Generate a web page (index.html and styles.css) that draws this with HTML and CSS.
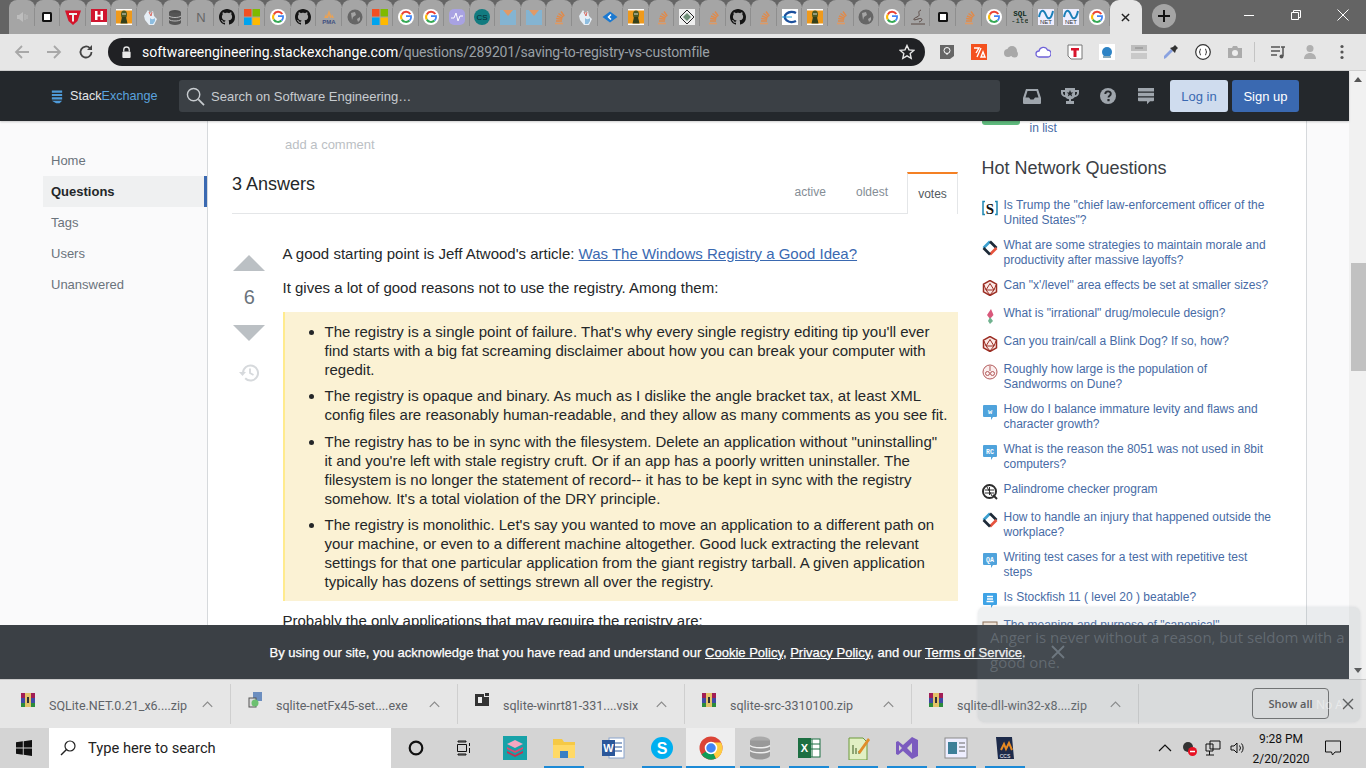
FILE: index.html
```html
<!DOCTYPE html>
<html lang="en">
<head>
<meta charset="utf-8">
<title>Saving to registry vs custom file - Software Engineering Stack Exchange</title>
<link rel="stylesheet" href="styles.css">
</head>
<body>
<svg class="defs" aria-hidden="true">
  <symbol id="spk" viewBox="0 0 16 16"><path d="M3 6h2l4-3v10l-4-3H3z" fill="#bdbdbd"/><path d="M11 5v6M13 6v4" stroke="#bdbdbd"/></symbol>
  <symbol id="box" viewBox="0 0 16 16"><rect x="3" y="3" width="10" height="10" rx="1.500" fill="#111"/><rect x="5" y="5" width="6" height="6" fill="#fff"/></symbol>
  <symbol id="tee" viewBox="0 0 16 16"><path d="M0 1.500h16L12.500 12 8 16 3.500 12z" fill="#d5132a"/><path d="M4 4h8v2H9v6.500H7V6H4z" fill="#eee"/></symbol>
  <symbol id="hh" viewBox="0 0 16 16"><rect width="16" height="16" fill="#fff"/><rect y="0" width="16" height="13" fill="#d0152f"/><path d="M4 2h2.500v3.800h3V2H12v9H9.500V7.500h-3V11H4z" fill="#fff"/></symbol>
  <symbol id="fig" viewBox="0 0 16 16"><rect width="16" height="16" fill="#fff"/><rect y="1.500" width="16" height="13" fill="#ef9a1c"/><ellipse cx="8" cy="5.500" rx="3" ry="4" fill="#4c5a23"/><path d="M6 8h4l1.500 6.500h-7z" fill="#33401b"/><circle cx="7" cy="5" r=".8" fill="#eee"/><circle cx="9" cy="5" r=".8" fill="#eee"/></symbol>
  <symbol id="hand" viewBox="0 0 16 16"><path d="M2 7l4-6 2 3 3-2 1 5 3 3-3 6H7L3 11z" fill="#e6eef6"/><path d="M8 9c2 2 4 1 5 0v3l-2 3H8z" fill="#8dbde0"/><path d="M7 3l2 4M10 3L9 7" stroke="#d8685f"/></symbol>
  <symbol id="db" viewBox="0 0 16 16"><ellipse cx="8" cy="3.500" rx="6" ry="2.500" fill="#4d4d4d"/><rect x="2" y="3.500" width="12" height="10" fill="#555"/><ellipse cx="8" cy="13.500" rx="6" ry="2.500" fill="#555"/><path d="M2 7c2 2 10 2 12 0M2 10.500c2 2 10 2 12 0" stroke="#bbb" fill="none"/></symbol>
  <symbol id="enn" viewBox="0 0 16 16"><text x="8" y="13" text-anchor="middle" font-family="Liberation Sans" font-size="13" fill="#666">N</text></symbol>
  <symbol id="gh" viewBox="0 0 16 16"><path fill="#141414" d="M8 0C3.580 0 0 3.580 0 8c0 3.540 2.290 6.530 5.470 7.590.4.070.55-.17.55-.38 0-.19-.01-.82-.01-1.490-2.010.37-2.530-.49-2.690-.94-.09-.23-.48-.94-.82-1.130-.28-.15-.68-.52-.01-.53.63-.01 1.080.58 1.230.82.720 1.210 1.870.87 2.330.66.070-.52.280-.87.510-1.070-1.780-.2-3.640-.89-3.640-3.950 0-.87.310-1.590.820-2.150-.08-.2-.36-1.020.08-2.120 0 0 .67-.21 2.200.82.640-.18 1.320-.27 2-.27s1.360.09 2 .27c1.530-1.040 2.200-.82 2.200-.82.440 1.100.160 1.920.080 2.120.510.560.820 1.270.820 2.150 0 3.070-1.870 3.750-3.650 3.950.290.250.540.730.540 1.480 0 1.070-.01 1.930-.01 2.200 0 .21.150.460.550.380A8.010 8.010 0 0 0 16 8c0-4.420-3.580-8-8-8z"/></symbol>
  <symbol id="ms" viewBox="0 0 16 16"><rect width="7.500" height="7.500" fill="#f25022"/><rect x="8.500" width="7.500" height="7.500" fill="#7fba00"/><rect y="8.500" width="7.500" height="7.500" fill="#00a4ef"/><rect x="8.500" y="8.500" width="7.500" height="7.500" fill="#ffb900"/></symbol>
  <symbol id="goo" viewBox="0 0 16 16"><circle cx="8" cy="8" r="8" fill="#fff"/><path d="M12.300 5A5 5 0 0 0 3.800 5.400" stroke="#ea4335" stroke-width="2" fill="none"/><path d="M3.800 5.400a5 5 0 0 0 0 5.200" stroke="#fbbc05" stroke-width="2" fill="none"/><path d="M3.800 10.600A5 5 0 0 0 11.500 11.500" stroke="#34a853" stroke-width="2" fill="none"/><path d="M8 7.200h5v1.600a5 5 0 0 1-1.500 2.700" stroke="#4285f4" stroke-width="1.800" fill="none"/></symbol>
  <symbol id="pma" viewBox="0 0 16 16"><path d="M8 1l3 8H9L8 6 7 9H5zM3 9l2-4 1 4zM13 9l-2-4-1 4z" fill="#e8a358"/><text x="8" y="14.500" text-anchor="middle" font-family="Liberation Sans" font-size="6" font-weight="700" fill="#3f4f80">PMA</text></symbol>
  <symbol id="globe" viewBox="0 0 16 16"><circle cx="8" cy="8" r="7.500" fill="#666"/><path d="M4 4l4-1 1 3-3 2-1 3zM10 10l3-2 0 3-2 2z" fill="#a5a5a5"/></symbol>
  <symbol id="wave" viewBox="0 0 16 16"><rect width="16" height="16" rx="5" fill="#a8a2e2"/><path d="M2 9h3l2-5 2 8 2-5h3" stroke="#fff" fill="none"/></symbol>
  <symbol id="teal" viewBox="0 0 16 16"><circle cx="8" cy="8" r="8" fill="#127b80"/><text x="8" y="11" text-anchor="middle" font-family="Liberation Sans" font-size="8" fill="#0a2a30">CS</text></symbol>
  <symbol id="em" viewBox="0 0 16 16"><rect y="1" width="16" height="15" fill="#84b4d2"/><path d="M3 1l5 6 5-6z" fill="#e09a68"/></symbol>
  <symbol id="so" viewBox="0 0 16 16"><path d="M4 14.500h8" stroke="#dd9a66" stroke-width="1.600"/><path d="M5 12h6M5.200 9.500l6 .8M6 7l5.500 2.200M7.500 4.500l4.800 3.500M10 2.500l3.300 4.500" stroke="#e08a4a" stroke-width="1.400"/></symbol>
  <symbol id="blu" viewBox="0 0 16 16"><path d="M8 2.500L15.500 8 8 13.500.5 8z" fill="#1b79d1"/><path d="M9 5.500L6.500 8 9 10.500" stroke="#fff" stroke-width="1.500" fill="none"/></symbol>
  <symbol id="dia" viewBox="0 0 16 16"><rect width="16" height="16" fill="#eee"/><path d="M8 1l7 7-7 7-7-7z" fill="none" stroke="#222"/><path d="M8 4l4 4-4 4-4-4z" fill="#6f8f78"/></symbol>
  <symbol id="cee" viewBox="0 0 16 16"><rect width="16" height="16" fill="#fff"/><path d="M14 4a7 5 0 1 0 0 8" stroke="#1b4f9c" stroke-width="2.500" fill="none"/><path d="M0 8h10" stroke="#1fa0d8"/></symbol>
  <symbol id="scr" viewBox="0 0 16 16"><path d="M11 1C6 3 12 6 7 8s-4 4 1 2 5 2 1 3M1 15h14" stroke="#5a4a45" fill="none"/></symbol>
  <symbol id="sql" viewBox="0 0 16 16"><text x="8" y="7" text-anchor="middle" font-family="Liberation Mono" font-size="7.500" font-weight="700" fill="#0c2a20">SQL</text><text x="8" y="14" text-anchor="middle" font-family="Liberation Mono" font-size="7.500" fill="#0c2a20">-ite</text></symbol>
  <symbol id="net" viewBox="0 0 16 16"><rect width="16" height="16" fill="#eef"/><path d="M1 8c2-9 5-7 7-2s5 5 7-4" stroke="#1a7fb8" stroke-width="2" fill="none"/><text x="8" y="15" text-anchor="middle" font-family="Liberation Sans" font-size="6" fill="#333">NET</text></symbol>
  <symbol id="rar" viewBox="0 0 16 16"><rect x="1" y="1" width="14" height="5" fill="#a21e55"/><rect x="1" y="6" width="14" height="5" fill="#3f4aa5"/><rect x="1" y="11" width="14" height="4" fill="#2c8c3c"/><rect x="5" y="1" width="6" height="14" fill="#e4c36a"/><rect x="7" y="5" width="2" height="6" fill="#333"/></symbol>
  <symbol id="sx" viewBox="0 0 16 16"><path d="M3 1.500H1v13h2" stroke="#1d87b2" stroke-width="1.500" fill="none"/><path d="M13 1.500h2v13h-2" stroke="#1d87b2" stroke-width="1.500" fill="none"/><text x="8" y="13.500" text-anchor="middle" font-family="Liberation Serif" font-weight="700" font-size="15" fill="#111">S</text></symbol>
  <symbol id="wp" viewBox="0 0 16 16"><path d="M1.500 8L8 1.500" stroke="#3ca0d0" stroke-width="2.600"/><path d="M8 1.500L14.500 8" stroke="#1d2a38" stroke-width="2.600"/><path d="M14.500 8L8 14.500" stroke="#e7543e" stroke-width="2.600"/><path d="M8 14.500L1.500 8" stroke="#1d2a38" stroke-width="2.600"/></symbol>
  <symbol id="rpg" viewBox="0 0 16 16"><path d="M8 .5l6.500 3.700v7.600L8 15.500 1.500 11.800V4.200z" fill="#fbe9e6" stroke="#9b2d23" stroke-width="1.500"/><path d="M8 3.500l4 6.500H4zM2 5l2 5 4 5 4-5 2-5" fill="none" stroke="#9b2d23"/></symbol>
  <symbol id="chm" viewBox="0 0 16 16"><path d="M9 1l2.500 6L8 11 5 7z" fill="#d9587b"/><path d="M8 9l3 4-3 3-2-3z" fill="#70b28f"/></symbol>
  <symbol id="wrm" viewBox="0 0 16 16"><circle cx="8" cy="8" r="7" fill="#fbeeee" stroke="#b25a5a"/><circle cx="5.500" cy="9.500" r="2" fill="none" stroke="#b25a5a"/><circle cx="10.500" cy="9.500" r="2" fill="none" stroke="#b25a5a"/><path d="M8 2v5" stroke="#b25a5a"/></symbol>
  <symbol id="bubw" viewBox="0 0 16 16"><path d="M2 1h12a1 1 0 0 1 1 1v10a1 1 0 0 1-1 1h-3l-2 3v-3H2a1 1 0 0 1-1-1V2a1 1 0 0 1 1-1z" fill="#4fa3dc"/><text x="8" y="10" text-anchor="middle" font-family="Liberation Mono" font-size="7" font-weight="700" fill="#fff">w</text></symbol>
  <symbol id="bubr" viewBox="0 0 16 16"><path d="M2 1h12a1 1 0 0 1 1 1v10a1 1 0 0 1-1 1h-3l-2 3v-3H2a1 1 0 0 1-1-1V2a1 1 0 0 1 1-1z" fill="#4fa3dc"/><text x="8" y="10" text-anchor="middle" font-family="Liberation Mono" font-size="6.500" font-weight="700" fill="#fff">RC</text></symbol>
  <symbol id="bubq" viewBox="0 0 16 16"><path d="M2 1h12a1 1 0 0 1 1 1v10a1 1 0 0 1-1 1h-3l-2 3v-3H2a1 1 0 0 1-1-1V2a1 1 0 0 1 1-1z" fill="#4fa3dc"/><text x="8" y="10" text-anchor="middle" font-family="Liberation Mono" font-size="6.500" font-weight="700" fill="#fff">QA</text></symbol>
  <symbol id="bubc" viewBox="0 0 16 16"><path d="M2 1h12a1 1 0 0 1 1 1v10a1 1 0 0 1-1 1h-3l-2 3v-3H2a1 1 0 0 1-1-1V2a1 1 0 0 1 1-1z" fill="#3ea3e6"/><path d="M5 4.500h6M5 7h6M4.500 9.500h7" stroke="#fff" stroke-width="1.300"/></symbol>
  <symbol id="cr" viewBox="0 0 16 16"><circle cx="7.500" cy="7.500" r="6.500" fill="#fff" stroke="#2d2d2d" stroke-width="2"/><path d="M3 6h9M3 9h9M7.500 3v8M5 3l5 9" stroke="#2d2d2d"/><path d="M11 11l4 4" stroke="#2d2d2d" stroke-width="2"/></symbol>
  <symbol id="can" viewBox="0 0 16 16"><rect x="1" y="2" width="14" height="12" fill="#fdeee0" stroke="#8c6a4e"/><path d="M4 5l2 2 2-2M9 9h4" stroke="#b44" fill="none"/></symbol>
  <symbol id="chev" viewBox="0 0 14 8"><path d="M1 7l6-6 6 6" fill="none" stroke="#8a8a8a" stroke-width="1.500"/></symbol>
</svg>

<div class="tabstrip">
  <div class="tabs">
    <div class="tab"><svg class="fav"><use href="#spk"/></svg></div>
    <div class="tab"><svg class="fav"><use href="#box"/></svg></div>
    <div class="tab"><svg class="fav"><use href="#tee"/></svg></div>
    <div class="tab"><svg class="fav"><use href="#hh"/></svg></div>
    <div class="tab"><svg class="fav"><use href="#fig"/></svg></div>
    <div class="tab"><svg class="fav"><use href="#hand"/></svg></div>
    <div class="tab"><svg class="fav"><use href="#db"/></svg></div>
    <div class="tab"><svg class="fav"><use href="#enn"/></svg></div>
    <div class="tab"><svg class="fav"><use href="#gh"/></svg></div>
    <div class="tab"><svg class="fav"><use href="#ms"/></svg></div>
    <div class="tab"><svg class="fav"><use href="#goo"/></svg></div>
    <div class="tab"><svg class="fav"><use href="#gh"/></svg></div>
    <div class="tab"><svg class="fav"><use href="#pma"/></svg></div>
    <div class="tab"><svg class="fav"><use href="#globe"/></svg></div>
    <div class="tab"><svg class="fav"><use href="#ms"/></svg></div>
    <div class="tab"><svg class="fav"><use href="#goo"/></svg></div>
    <div class="tab"><svg class="fav"><use href="#goo"/></svg></div>
    <div class="tab"><svg class="fav"><use href="#wave"/></svg></div>
    <div class="tab"><svg class="fav"><use href="#teal"/></svg></div>
    <div class="tab"><svg class="fav"><use href="#em"/></svg></div>
    <div class="tab"><svg class="fav"><use href="#em"/></svg></div>
    <div class="tab"><svg class="fav"><use href="#so"/></svg></div>
    <div class="tab"><svg class="fav"><use href="#hand"/></svg></div>
    <div class="tab"><svg class="fav"><use href="#blu"/></svg></div>
    <div class="tab"><svg class="fav"><use href="#fig"/></svg></div>
    <div class="tab"><svg class="fav"><use href="#so"/></svg></div>
    <div class="tab"><svg class="fav"><use href="#dia"/></svg></div>
    <div class="tab"><svg class="fav"><use href="#so"/></svg></div>
    <div class="tab"><svg class="fav"><use href="#gh"/></svg></div>
    <div class="tab"><svg class="fav"><use href="#so"/></svg></div>
    <div class="tab"><svg class="fav"><use href="#cee"/></svg></div>
    <div class="tab"><svg class="fav"><use href="#fig"/></svg></div>
    <div class="tab"><svg class="fav"><use href="#so"/></svg></div>
    <div class="tab"><svg class="fav"><use href="#globe"/></svg></div>
    <div class="tab"><svg class="fav"><use href="#goo"/></svg></div>
    <div class="tab"><svg class="fav"><use href="#scr"/></svg></div>
    <div class="tab"><svg class="fav"><use href="#box"/></svg></div>
    <div class="tab"><svg class="fav"><use href="#so"/></svg></div>
    <div class="tab"><svg class="fav"><use href="#goo"/></svg></div>
    <div class="tab"><svg class="fav"><use href="#sql"/></svg></div>
    <div class="tab"><svg class="fav"><use href="#net"/></svg></div>
    <div class="tab"><svg class="fav"><use href="#net"/></svg></div>
    <div class="tab"><svg class="fav"><use href="#goo"/></svg></div>
    <div class="tab-active"><svg class="glyph10" viewBox="0 0 10 10"><path d="M1 1l8 8M9 1l-8 8" stroke="#222" stroke-width="1.600"/></svg></div>
  </div>
  <div class="newtab"><svg class="glyph12" viewBox="0 0 12 12"><path d="M6 0v12M0 6h12" stroke="#111" stroke-width="2"/></svg></div>
  <div class="winctl">
    <svg class="winbtn" viewBox="0 0 12 12"><path d="M1 6.500h10" stroke="#fff"/></svg>
    <svg class="winbtn" viewBox="0 0 12 12"><path d="M1.500 3.500h7v7h-7zM3.500 3.500v-2h7v7h-2" stroke="#fff" fill="none"/></svg>
    <svg class="winbtn" viewBox="0 0 12 12"><path d="M.5.500l11 11M11.500.500l-11 11" stroke="#fff"/></svg>
  </div>
</div>

<div class="toolbar">
  <div class="navs">
    <svg class="nav" viewBox="0 0 16 16"><path d="M15 8H2M8 2L2 8l6 6" fill="none" stroke="#a8a8a8" stroke-width="1.800"/></svg>
    <svg class="nav" viewBox="0 0 16 16"><path d="M1 8h13M8 2l6 6-6 6" fill="none" stroke="#a8a8a8" stroke-width="1.800"/></svg>
    <svg class="nav" viewBox="0 0 16 16"><path d="M13.500 8a5.500 5.500 0 1 1-1.600-3.900" fill="none" stroke="#444" stroke-width="1.800"/><path d="M14 1v5H9z" fill="#444"/></svg>
  </div>
  <div class="omni">
    <svg class="lock" viewBox="0 0 12 14"><path d="M3 6V4a3 3 0 0 1 6 0v2" fill="none" stroke="#e8e8e8" stroke-width="1.400"/><rect x="1.500" y="6" width="9" height="7" rx="1" fill="#e8e8e8"/></svg>
    <span class="url"><span class="url-host">softwareengineering.stackexchange.com</span>/questions/289201/saving-to-registry-vs-customfile</span>
    <svg class="star" viewBox="0 0 16 16"><path d="M8 1.500l2 4.400 4.800.5-3.600 3.200 1 4.700L8 11.900l-4.200 2.400 1-4.700L1.200 6.400 6 5.900z" fill="none" stroke="#e8e8e8" stroke-width="1.400"/></svg>
  </div>
  <div class="exts">
    <svg class="ext" viewBox="0 0 16 16"><path d="M1 1h14v11l-4 3H1z" fill="#666"/><circle cx="8" cy="6.500" r="3" fill="none" stroke="#fff"/><path d="M7 10h2" stroke="#fff"/></svg>
    <svg class="ext" viewBox="0 0 16 16"><rect width="16" height="16" fill="#f4511e"/><path d="M3 4h5L5 9M10 4l-4 9M10 13l2-5 2 5z" stroke="#fff" fill="none" stroke-width="1.400"/></svg>
    <svg class="ext" viewBox="0 0 16 16"><circle cx="5" cy="9" r="4" fill="#a8a8a8"/><circle cx="9" cy="7" r="5" fill="#a8a8a8"/><circle cx="11.500" cy="10" r="3.500" fill="#a8a8a8"/></svg>
    <svg class="ext" viewBox="0 0 16 16"><path d="M4 13a3 3 0 0 1 0-6 4.500 4.500 0 0 1 8.500-1A3.500 3.500 0 0 1 12.500 13z" fill="#fff" stroke="#6f62d8" stroke-width="1.300"/></svg>
    <svg class="ext" viewBox="0 0 16 16"><path d="M1 1h14v14H4l-3-3z" fill="#fff" stroke="#777"/><path d="M4 4h8v2.500H9.500V13h-3V6.500H4z" fill="#d8142c"/></svg>
    <svg class="ext" viewBox="0 0 16 16"><rect width="16" height="16" fill="#fff"/><circle cx="8" cy="8" r="5" fill="#2d83c5"/><rect x="4" y="12" width="8" height="2" fill="#8ab"/></svg>
    <svg class="ext" viewBox="0 0 16 16"><rect x="0" y="1" width="16" height="6" fill="#bdbdbd"/><rect x="0" y="9" width="16" height="6" fill="#c9c9c9"/><path d="M4 4h8" stroke="#888"/></svg>
    <svg class="ext" viewBox="0 0 16 16"><path d="M1 15l2-1 7-7-2-2-7 7z" fill="#8aa2e0"/><path d="M7 4l5 5 1-3 2-2-3-3-2 2z" fill="#333"/></svg>
    <svg class="ext" viewBox="0 0 16 16"><circle cx="8" cy="8" r="7.300" fill="#fff" stroke="#333" stroke-width="1.200"/><path d="M6 5c-2 0 0 3-2 3 2 0 0 3 2 3M10 5c2 0 0 3 2 3-2 0 0 3-2 3" stroke="#333" fill="none"/></svg>
    <svg class="ext" viewBox="0 0 16 16"><path d="M1 4h4l1-2h4l1 2h4v10H1z" fill="#ababab"/><circle cx="8" cy="9" r="3" fill="#eee"/></svg>
    <div class="ext-sep"></div>
    <svg class="ext" viewBox="0 0 16 16"><path d="M1 3h9M1 7h9M1 11h6M11 3h4M13 3v9" stroke="#555" stroke-width="1.500" fill="none"/><circle cx="11.500" cy="12.500" r="2" fill="#555"/></svg>
    <svg class="ext" viewBox="0 0 16 16"><circle cx="8" cy="4.500" r="3.500" fill="#b0b0b0"/><path d="M2 15c0-8 12-8 12 0z" fill="#b0b0b0"/></svg>
    <svg class="ext" viewBox="0 0 16 16"><circle cx="8" cy="2.500" r="1.600" fill="#555"/><circle cx="8" cy="8" r="1.600" fill="#555"/><circle cx="8" cy="13.500" r="1.600" fill="#555"/></svg>
  </div>
</div>

<div class="browser">
  <div class="viewport">
    <header class="topbar">
      <div class="logo">
        <svg class="logo-ico" viewBox="0 0 14 16"><path d="M1 1h12v2.500H1zM1 5h12v2.500H1zM1 9h12v2.500H1zM1 13h12l-3 3H6z" fill="#4f9bd9"/></svg>
        <span class="logo-a">Stack</span><span class="logo-b">Exchange</span>
      </div>
      <div class="search">
        <svg class="mag" viewBox="0 0 20 20"><circle cx="8" cy="8" r="6.500" fill="none" stroke="#c8ccd0" stroke-width="1.500"/><path d="M13 13l6 6" stroke="#c8ccd0" stroke-width="1.800"/></svg>
        <span>Search on Software Engineering…</span>
      </div>
      <div class="topicons">
        <svg class="ti" viewBox="0 0 18 18"><path d="M3 2h12l3 9v5a1 1 0 0 1-1 1H1a1 1 0 0 1-1-1v-5z" fill="#9fa6ad"/><path d="M2.500 10.500L4.500 4h9l2 6.500H12l-1.500 2h-3L6 10.500z" fill="#24282c"/></svg>
        <svg class="ti" viewBox="0 0 18 18"><path d="M4 1h10v2h4v3c0 2-2 4-4.500 4.200C12.800 11.500 11 12 10 12.300V14h3v3H5v-3h3v-1.700c-1-.3-2.800-.8-3.500-2.100C2 10 0 8 0 6V3h4zM2 5v1c0 1 1 2 2 2.300V5zM14 5v3.300c1-.3 2-1.300 2-2.300V5z" fill="#9fa6ad"/><path d="M9 3l1 2.500h2.300L10.500 7l.7 2.500L9 8 6.800 9.500 7.500 7 5.700 5.500H8z" fill="#24282c"/></svg>
        <svg class="ti" viewBox="0 0 18 18"><circle cx="9" cy="9" r="8" fill="#9fa6ad"/><path d="M6.300 7c0-3.500 5.500-3.500 5.500-.3 0 2-2.300 2-2.300 3.800" fill="none" stroke="#24282c" stroke-width="1.900"/><rect x="8.400" y="12" width="2.200" height="2.200" fill="#24282c"/></svg>
        <svg class="ti" viewBox="0 0 18 18"><path d="M1 1h16v3.500H1zM1 5.800h16v3.500H1zM1 10.600h16v2.600a1 1 0 0 1-1 1h-3l-3 3v-3H2a1 1 0 0 1-1-1z" fill="#9fa6ad"/></svg>
      </div>
      <a class="btn btn-login">Log in</a>
      <a class="btn btn-signup">Sign up</a>
    </header>
    <div class="content">
      <nav class="leftnav">
        <a class="nav-item">Home</a>
        <a class="nav-item nav-active">Questions</a>
        <a class="nav-item">Tags</a>
        <a class="nav-item">Users</a>
        <a class="nav-item">Unanswered</a>
      </nav>
      <div class="center">
        <main class="main">
          <div class="add-comment">add a comment</div>
          <div class="ans-head">
            <h2>3 Answers</h2>
            <div class="sort">
              <a class="sort-tab">active</a>
              <a class="sort-tab">oldest</a>
              <a class="sort-tab sort-active">votes</a>
            </div>
          </div>
          <div class="answer">
            <div class="votes">
              <div class="arrow-up"></div>
              <div class="count">6</div>
              <div class="arrow-down"></div>
              <svg class="hist" viewBox="0 0 20 20"><path d="M4 10a7.500 7.500 0 1 1 2.200 5.300" fill="none" stroke="#d6d9dc" stroke-width="2"/><path d="M0 9h7l-3.500 4z" fill="#d6d9dc"/><path d="M11 5.500V10l3.500 2" fill="none" stroke="#d6d9dc" stroke-width="1.800"/></svg>
            </div>
            <div class="post">
              <p>A good starting point is Jeff Atwood's article: <a class="link">Was The Windows Registry a Good Idea?</a></p>
              <p>It gives a lot of good reasons not to use the registry. Among them:</p>
              <blockquote>
                <ul>
                  <li>The registry is a single point of failure. That's why every single registry editing tip you'll ever find starts with a big fat screaming disclaimer about how you can break your computer with regedit.</li>
                  <li>The registry is opaque and binary. As much as I dislike the angle bracket tax, at least XML config files are reasonably human-readable, and they allow as many comments as you see fit.</li>
                  <li>The registry has to be in sync with the filesystem. Delete an application without "uninstalling" it and you're left with stale registry cruft. Or if an app has a poorly written uninstaller. The filesystem is no longer the statement of record-- it has to be kept in sync with the registry somehow. It's a total violation of the DRY principle.</li>
                  <li>The registry is monolithic. Let's say you wanted to move an application to a different path on your machine, or even to a different machine altogether. Good luck extracting the relevant settings for that one particular application from the giant registry tarball. A given application typically has dozens of settings strewn all over the registry.</li>
                </ul>
              </blockquote>
              <p>Probably the only applications that may require the registry are:</p>
            </div>
          </div>
        </main>
        <aside class="side">
          <div class="linked">
            <div class="linked-box"></div>
            <a class="hot-link linked-text">in list</a>
          </div>
          <h4>Hot Network Questions</h4>
          <ul class="hot">
            <li><svg class="sico"><use href="#sx"/></svg><a class="hot-link">Is Trump the "chief law-enforcement officer of the United States"?</a></li>
            <li><svg class="sico"><use href="#wp"/></svg><a class="hot-link">What are some strategies to maintain morale and productivity after massive layoffs?</a></li>
            <li><svg class="sico"><use href="#rpg"/></svg><a class="hot-link">Can "x'/level" area effects be set at smaller sizes?</a></li>
            <li><svg class="sico"><use href="#chm"/></svg><a class="hot-link">What is "irrational" drug/molecule design?</a></li>
            <li><svg class="sico"><use href="#rpg"/></svg><a class="hot-link">Can you train/call a Blink Dog? If so, how?</a></li>
            <li><svg class="sico"><use href="#wrm"/></svg><a class="hot-link">Roughly how large is the population of Sandworms on Dune?</a></li>
            <li><svg class="sico"><use href="#bubw"/></svg><a class="hot-link">How do I balance immature levity and flaws and character growth?</a></li>
            <li><svg class="sico"><use href="#bubr"/></svg><a class="hot-link">What is the reason the 8051 was not used in 8bit computers?</a></li>
            <li><svg class="sico"><use href="#cr"/></svg><a class="hot-link">Palindrome checker program</a></li>
            <li><svg class="sico"><use href="#wp"/></svg><a class="hot-link">How to handle an injury that happened outside the workplace?</a></li>
            <li><svg class="sico"><use href="#bubq"/></svg><a class="hot-link">Writing test cases for a test with repetitive test steps</a></li>
            <li><svg class="sico"><use href="#bubc"/></svg><a class="hot-link">Is Stockfish 11 ( level 20 ) beatable?</a></li>
            <li><svg class="sico"><use href="#can"/></svg><a class="hot-link">The meaning and purpose of "canonical"</a></li>
          </ul>
        </aside>
      </div>
      <div class="gutter"></div>
    </div>
    <div class="cookie">
      <span class="cookie-text">By using our site, you acknowledge that you have read and understand our <u>Cookie Policy</u>, <u>Privacy Policy</u>, and our <u>Terms of Service</u>.</span>
      <svg class="cookie-x" viewBox="0 0 14 14"><path d="M1 1l12 12M13 1L1 13" stroke="#6a737c" stroke-width="1.800"/></svg>
    </div>
  </div>
  <div class="scrollbar">
    <svg class="sb-arrow" viewBox="0 0 8 5"><path d="M4 0l4 5H0z" fill="#555"/></svg>
    <div class="sb-track"><div class="sb-thumb"></div></div>
    <svg class="sb-arrow" viewBox="0 0 8 5"><path d="M0 0h8L4 5z" fill="#555"/></svg>
  </div>
</div>

<div class="shelf">
  <div class="dl"><svg class="dl-ico"><use href="#rar"/></svg><span class="dl-name">SQLite.NET.0.21_x6....zip</span><svg class="chev"><use href="#chev"/></svg></div>
  <div class="dl"><svg class="dl-ico" viewBox="0 0 16 16"><rect x="6" y="0" width="9" height="9" fill="#6c8ebf"/><rect x="2" y="6" width="7" height="9" fill="#ddd" stroke="#555"/><circle cx="8" cy="11" r="3.500" fill="#6cc070"/></svg><span class="dl-name">sqlite-netFx45-set....exe</span><svg class="chev"><use href="#chev"/></svg></div>
  <div class="dl"><svg class="dl-ico" viewBox="0 0 16 16"><path d="M1 2h9v3h5v9H1z" fill="#333"/><rect x="4" y="5" width="4" height="6" fill="#eee"/><rect x="11" y="1" width="4" height="3" fill="#333"/></svg><span class="dl-name">sqlite-winrt81-331....vsix</span><svg class="chev"><use href="#chev"/></svg></div>
  <div class="dl"><svg class="dl-ico"><use href="#rar"/></svg><span class="dl-name">sqlite-src-3310100.zip</span><svg class="chev"><use href="#chev"/></svg></div>
  <div class="dl"><svg class="dl-ico"><use href="#rar"/></svg><span class="dl-name">sqlite-dll-win32-x8....zip</span><svg class="chev"><use href="#chev"/></svg></div>
  <div class="shelf-end">
    <div class="showall">Show all</div>
    <svg class="shelf-x" viewBox="0 0 12 12"><path d="M1 1l10 10M11 1L1 11" stroke="#555" stroke-width="1.400"/></svg>
  </div>
</div>

<div class="taskbar">
  <svg class="start" viewBox="0 0 16 16"><path d="M0 2.300L6.800 1.300V7.600H0zM7.700 1.200L16 0V7.600H7.700zM0 8.400H6.800V14.700L0 13.700zM7.700 8.400H16V16L7.700 14.800z" fill="#111"/></svg>
  <div class="tb-search">
    <svg class="tb-mag" viewBox="0 0 16 16"><circle cx="10" cy="6" r="5" fill="none" stroke="#222" stroke-width="1.200"/><path d="M6.500 9.500L1 15" stroke="#222" stroke-width="1.400"/></svg>
    <span>Type here to search</span>
  </div>
  <div class="tb-sys">
    <svg class="tb-cortana" viewBox="0 0 16 16"><circle cx="8" cy="8" r="6.300" fill="none" stroke="#111" stroke-width="2.200"/></svg>
    <svg class="tb-view" viewBox="0 0 16 16"><path d="M3 1h8v1H3zM3 14h8v1H3zM2.500 4.500h9v7h-9z" fill="none" stroke="#111"/><path d="M14 3h1v3h-1zM14 8h1v5h-1z" fill="#111"/></svg>
  </div>
  <div class="apps">
    <div class="app app-idle"><svg class="app-ico" viewBox="0 0 24 24"><rect width="24" height="24" fill="#17a2a8"/><path d="M12 4l8 4-8 4-8-4z" fill="#f4a6c0"/><path d="M4 11l8 4 8-4v2l-8 4-8-4z" fill="#e0486e"/><path d="M4 15l8 4 8-4v2l-8 4-8-4z" fill="#c9304f"/></svg></div>
    <div class="app"><svg class="app-ico" viewBox="0 0 24 24"><path d="M1 3h9l2 3h11v16H1z" fill="#f6c945"/><rect x="1" y="9" width="22" height="13" fill="#ffd966"/><rect x="8" y="15" width="8" height="7" fill="#3a7fc4"/></svg></div>
    <div class="app app-idle"><svg class="app-ico" viewBox="0 0 24 24"><rect x="8" y="2" width="15" height="20" fill="#fff" stroke="#8aa4cc"/><path d="M11 7h10M11 11h10M11 15h10" stroke="#2b579a"/><rect x="1" y="4" width="13" height="16" fill="#2b579a"/><text x="7.500" y="16" text-anchor="middle" font-family="Liberation Sans" font-size="11" font-weight="700" fill="#fff">W</text></svg></div>
    <div class="app"><svg class="app-ico" viewBox="0 0 24 24"><circle cx="12" cy="12" r="11" fill="#00aff0"/><text x="12" y="18" text-anchor="middle" font-family="Liberation Sans" font-size="16" font-weight="700" fill="#fff">S</text></svg></div>
    <div class="app app-active"><svg class="app-ico" viewBox="0 0 24 24"><circle cx="12" cy="12" r="11.500" fill="#db4437"/><path d="M12 12L2.500 18.500A11.500 11.500 0 0 0 17 22.500z" fill="#0f9d58"/><path d="M12 12l5 10.500A11.500 11.500 0 0 0 23.500 12 11.500 11.500 0 0 0 22 6.500H12z" fill="#ffcd40"/><circle cx="12" cy="12" r="5.500" fill="#4285f4" stroke="#fff" stroke-width="1.500"/></svg></div>
    <div class="app"><svg class="app-ico" viewBox="0 0 24 24"><ellipse cx="12" cy="4.500" rx="10" ry="4" fill="#aaa"/><rect x="2" y="4.500" width="20" height="15" fill="#999"/><ellipse cx="12" cy="19.500" rx="10" ry="4" fill="#999"/><path d="M2 9.500c3 3 17 3 20 0M2 14.500c3 3 17 3 20 0" stroke="#eee" fill="none" stroke-width="1.500"/></svg></div>
    <div class="app"><svg class="app-ico" viewBox="0 0 24 24"><rect x="9" y="3" width="14" height="18" fill="#fff" stroke="#1d6f42"/><path d="M15 3v18M9 8h14M9 13h14" stroke="#1d6f42"/><rect x="1" y="2" width="13" height="20" fill="#1d6f42"/><text x="7.500" y="16" text-anchor="middle" font-family="Liberation Sans" font-size="11" font-weight="700" fill="#fff">X</text></svg></div>
    <div class="app"><svg class="app-ico" viewBox="0 0 24 24"><path d="M3 2h14l4 4v18H3z" fill="#e2f0c4" stroke="#6c9a3a"/><path d="M7 9v9M10 12v6M13 15v3" stroke="#3a5a20"/><path d="M12 16L22 2l2 2-10 14z" fill="#e08d2a"/></svg></div>
    <div class="app"><svg class="app-ico" viewBox="0 0 24 24"><path d="M17 1l6 3v16l-6 3-9-8-5 4-2-1V6l2-1 5 4zM17 7l-5 5 5 5zM4 9v6l3-3z" fill="#7b5bbf"/></svg></div>
    <div class="app"><svg class="app-ico" viewBox="0 0 24 24"><rect x="1" y="2" width="22" height="20" fill="#eef" stroke="#8a8a8a"/><rect x="4" y="6" width="9" height="12" fill="#3d7f99"/><path d="M15 7h6M15 11h6M15 15h6" stroke="#666"/></svg></div>
    <div class="app"><svg class="app-ico" viewBox="0 0 24 24"><path d="M3 1h16l2 22H5z" fill="#1d2a4a"/><path d="M8 14l3-6 2 5 3-6 3 7" stroke="#e78a23" stroke-width="2" fill="none"/><text x="12" y="22" text-anchor="middle" font-family="Liberation Sans" font-size="5" fill="#fff">CCS</text></svg></div>
  </div>
  <div class="tray">
    <svg class="tray-ico" viewBox="0 0 16 16"><path d="M2 11l6-6 6 6" fill="none" stroke="#111" stroke-width="1.200"/></svg>
    <svg class="tray-ico" viewBox="0 0 16 16"><circle cx="7" cy="7" r="5" fill="#333"/><circle cx="11.500" cy="11.500" r="4.500" fill="#e81123"/><path d="M9 11.500h5" stroke="#fff" stroke-width="1.500"/></svg>
    <svg class="tray-ico" viewBox="0 0 16 16"><path d="M5 1h10v8H5zM1 4h7v7H1zM4.500 11v4M1 15h8" fill="none" stroke="#111"/></svg>
    <svg class="tray-ico" viewBox="0 0 16 16"><path d="M2 6h3l3-3v10l-3-3H2z" fill="none" stroke="#111"/><path d="M10.500 5.500a4 4 0 0 1 0 5M12.500 3.500a7 7 0 0 1 0 9" fill="none" stroke="#111"/></svg>
    <div class="clock"><span>9:28 PM</span><span>2/20/2020</span></div>
    <svg class="notif" viewBox="0 0 16 16"><path d="M.500 1h15v11h-5.500l-2.500 3-1-3H.500z" fill="none" stroke="#111"/></svg>
  </div>
</div>

<div class="toast">
  <p>Anger is never without a reason, but seldom with a good one.</p>
  <span class="toast-foot">No A</span>
</div>
</body>
</html>
```
FILE: styles.css
```css
* { box-sizing: border-box; }
html, body { margin: 0; padding: 0; width: 1366px; height: 768px; overflow: hidden; }
body { font-family: "Liberation Sans", Arial, sans-serif; display: flex; flex-direction: column; background: #fff; position: relative; }
a { text-decoration: none; }
.defs { width: 0; height: 0; flex: none; display: block; }

.tabstrip { height: 34px; flex: none; display: flex; background: #646464; padding-left: 9px; }
.tabs { display: flex; }
.tab { width: 25.6px; height: 34px; display: flex; align-items: center; justify-content: center; border-radius: 8px 8px 0 0; background: linear-gradient(#8e8e8e, #8e8e8e) right center / 1px 18px no-repeat, #a5a5a5; }
.fav { width: 16px; height: 16px; }
.tab-active { width: 32px; height: 34px; border-radius: 9px 9px 0 0; background: #e6e6e6; display: flex; align-items: center; justify-content: center; }
.glyph10 { width: 9px; height: 9px; }
.newtab { width: 24px; height: 24px; margin: 4px 0 0 10px; border-radius: 50%; background: #a5a5a5; display: flex; align-items: center; justify-content: center; }
.glyph12 { width: 12px; height: 12px; }
.winctl { margin-left: auto; display: flex; gap: 35px; padding: 9px 17px 0 0; }
.winbtn { width: 12px; height: 12px; }

.toolbar { height: 37px; flex: none; background: #e6e6e6; border-bottom: 1px solid #cfcfcf; display: flex; align-items: center; }
.navs { display: flex; gap: 16px; width: 108px; padding-left: 14px; }
.nav { width: 16px; height: 16px; }
.omni { width: 817px; height: 28px; margin-top: 0; border-radius: 14px; background: #202124; display: flex; align-items: center; padding: 0 10px 0 13px; }
.lock { width: 11px; height: 13px; margin-right: 10px; }
.url { font: 14px/28px Roboto, "Liberation Sans", sans-serif; color: #9aa0a6; flex: 1; white-space: nowrap; letter-spacing: -.19px; }
.url-host { color: #fff; letter-spacing: 0; }
.star { width: 16px; height: 16px; }
.exts { display: flex; align-items: center; gap: 16px; padding-left: 14px; }
.ext { width: 16px; height: 16px; flex: none; }
.ext-sep { width: 1px; height: 20px; background: #c4c4c4; margin: 0 -1px 0 -5px; }

.browser { height: 608px; flex: none; display: flex; }
.viewport { flex: 1; min-width: 0; display: flex; flex-direction: column; }
.topbar { height: 50px; flex: none; background: #24282c; display: flex; align-items: center; padding-left: 51px; box-shadow: 0 1px 2px rgba(0,0,0,.2); position: relative; z-index: 2; }
.logo { width: 128px; display: flex; align-items: center; font-size: 12.600px; }
.logo-ico { width: 12px; height: 15px; margin-right: 7px; }
.logo-a { color: #e4e6e8; }
.logo-b { color: #5aa2de; }
.search { width: 821px; height: 32px; background: #3b4045; border-radius: 3px; display: flex; align-items: center; padding-left: 7px; color: #c8ccd0; font-size: 13px; }
.mag { width: 19px; height: 19px; margin-right: 6px; }
.topicons { display: flex; align-items: center; gap: 20px; margin-left: 23px; width: 147px; }
.ti { width: 18px; height: 18px; }
.btn { height: 32px; display: flex; align-items: center; justify-content: center; border-radius: 3px; font-size: 13px; }
.btn-login { width: 58px; background: #cfdcee; color: #3a69b1; }
.btn-signup { width: 67px; background: #3a69b1; color: #fff; margin-left: 4px; }

.content { flex: 1; min-height: 0; display: flex; overflow: hidden; background: #fafafb; }
.leftnav { width: 208px; flex: none; padding: 24px 0 0 43px; border-right: 1px solid #d6d9dc; display: flex; flex-direction: column; }
.nav-item { height: 31px; line-height: 31px; padding-left: 8px; font-size: 13px; color: #6a737c; }
.nav-active { background: #eff0f1; color: #242729; font-weight: 700; border-right: 3px solid #3a69b1; }
.center { width: 1099px; flex: none; background: #fff; border-right: 1px solid #d6d9dc; display: flex; padding-left: 24px; }
.main { width: 726px; flex: none; }
.add-comment { font-size: 13px; line-height: 17px; color: #bbc0c4; padding: 15px 0 0 53px; }
.ans-head { height: 61px; border-bottom: 1px solid #e4e6e8; display: flex; justify-content: space-between; }
.ans-head h2 { margin: 19px 0 0; font-size: 18px; font-weight: 400; line-height: 24px; color: #242729; }
.sort { display: flex; padding-top: 19px; }
.sort-tab { height: 42px; padding: 0 12px; line-height: 41px; font-size: 12px; color: #848d95; margin-right: 6px; }
.sort-tab:nth-child(2) { margin-right: 7px; }
.sort-tab:nth-child(3) { margin-right: 0; }
.sort-active { width: 51px; padding: 0; text-align: center; color: #535a60; background: #fff; border: 1px solid #e4e6e8; border-top: 2px solid #f48024; border-bottom: 0; }
.answer { display: flex; padding-top: 30px; }
.votes { width: 50.500px; flex: none; display: flex; flex-direction: column; align-items: center; padding-right: 16px; margin-top: 11px; }
.arrow-up { width: 0; height: 0; border: 16px solid transparent; border-top: 0; border-bottom: 16px solid #bbc0c4; flex: none; }
.count { font-size: 20px; line-height: 26px; color: #6a737c; margin: 13px 0 15px; }
.arrow-down { width: 0; height: 0; border: 16px solid transparent; border-bottom: 0; border-top: 16px solid #bbc0c4; flex: none; }
.hist { width: 20px; height: 20px; margin-top: 22px; flex: none; }
.post { width: 675.500px; flex: none; font-size: 15px; line-height: 19px; color: #242729; }
.post p { margin: 0 0 15px; }
.link { color: #3a69b1; text-decoration: underline; }
blockquote { margin: 1px 0 10px; background: #fbf2d4; border-left: 2px solid #ffeb8e; padding: 9.750px 10px 10px 0; }
blockquote ul { margin: 0; padding-left: 40px; }
blockquote li { margin-bottom: 7.500px; }
blockquote li:last-child { margin-bottom: 0; }
.side { width: 298px; flex: none; margin-left: 23.500px; }
.linked { display: flex; height: 17px; margin-bottom: 18px; }
.linked-box { width: 38px; height: 4px; background: #5fba7d; border-radius: 0 0 3px 3px; margin-right: 10px; }
.linked-text { font-size: 12px; line-height: 15px; }
.side h4 { margin: 0 0 18px; font-size: 18px; line-height: 24px; font-weight: 400; color: #3b4045; }
.hot { list-style: none; margin: 0; padding: 0; display: flex; flex-direction: column; gap: 10px; }
.hot li { display: flex; min-height: 18px; }
.sico { width: 16px; height: 16px; flex: none; margin: 2px 6px 0 0; }
.hot-link { font-size: 12px; line-height: 15px; color: #476ba5; }
.hot li .hot-link { width: 270px; }
.gutter { flex: 1; }

.cookie { height: 54px; flex: none; background: #3b4045; display: flex; align-items: center; justify-content: center; color: #fff; padding-right: 15px; }
.cookie-text { font-size: 13.030px; -webkit-text-stroke: .25px #fff; }
.cookie-x { width: 14px; height: 14px; margin-left: 25px; }

.scrollbar { width: 17px; flex: none; background: #f1f1f1; display: flex; flex-direction: column; align-items: center; }
.sb-arrow { width: 8px; height: 5px; margin: 6px 0; flex: none; }
.sb-track { flex: 1; width: 100%; padding: 175px 0 0 2px; }
.sb-thumb { height: 108px; background: #c1c1c1; }

.shelf { height: 49px; flex: none; background: #e6e6e6; display: flex; align-items: center; border-top: 1px solid #c9c9c9; padding-left: 4px; }
.dl { width: 227px; height: 40px; flex: none; display: flex; align-items: center; padding-left: 16px; border-right: 1px solid #cfcfcf; }
.dl-ico { width: 16px; height: 16px; margin: -8px 13px 0 0; flex: none; }
.dl-name { width: 145px; font: 12.500px Roboto, "Liberation Sans", sans-serif; color: #5f6368; white-space: nowrap; margin-top: 3px; }
.chev { width: 11px; height: 7px; margin-left: 7.500px; }
.shelf-end { flex: 1; display: flex; align-items: center; justify-content: flex-end; padding-right: 12px; gap: 13px; }
.showall { width: 77px; height: 31px; border: 1px solid #6f6f6f; border-radius: 4px; display: flex; align-items: center; justify-content: center; font: 600 11px "Open Sans", sans-serif; color: #555; margin-top: -1px; }
.shelf-x { width: 12px; height: 12px; }

.taskbar { height: 40px; flex: none; background: #d4d4d4; display: flex; align-items: center; padding-left: 16px; }
.start { width: 16px; height: 16px; }
.tb-search { width: 342px; height: 40px; margin-left: 17px; background: #fff; display: flex; align-items: center; padding-left: 11px; font: 14.700px Roboto, "Liberation Sans", sans-serif; color: #222; }
.tb-mag { width: 16px; height: 16px; margin-right: 12px; }
.tb-sys { display: flex; align-items: center; gap: 31px; margin-left: 17px; width: 83px; }
.tb-cortana, .tb-view { width: 16px; height: 16px; }
.apps { display: flex; margin-left: -1px; }
.app { width: 49px; height: 40px; display: flex; align-items: center; justify-content: center; background: linear-gradient(#1c8ad6, #1c8ad6) center bottom / 40px 2px no-repeat; }
.app-idle { background: none; }
.app-active { background: linear-gradient(#1c8ad6, #1c8ad6) center bottom / 49px 2px no-repeat, #eeeeee; }
.app-ico { width: 24px; height: 24px; }
.tray { margin-left: auto; display: flex; align-items: center; height: 40px; gap: 8px; padding-right: 25px; }
.tray-ico { width: 16px; height: 16px; }
.clock { width: 56px; display: flex; flex-direction: column; align-items: center; font: 12px/20px Roboto, "Liberation Sans", sans-serif; color: #111; margin-top: 1px; white-space: nowrap; }
.notif { width: 16px; height: 16px; margin-left: 8px; }

.toast { position: absolute; left: 978px; top: 607px; width: 382px; height: 115px; border-radius: 7px; background: rgba(130,145,155,.13); box-shadow: 0 0 3px rgba(130,140,150,.25); padding: 18px 12px; z-index: 5; overflow: hidden; }
.toast p { margin: 0; font: 15px/25px "Open Sans", sans-serif; color: rgba(150,160,170,.38); }
.toast-foot { position: absolute; left: 338px; top: 89px; font: 12px "Open Sans", sans-serif; color: rgba(255,255,255,.45); }
```
